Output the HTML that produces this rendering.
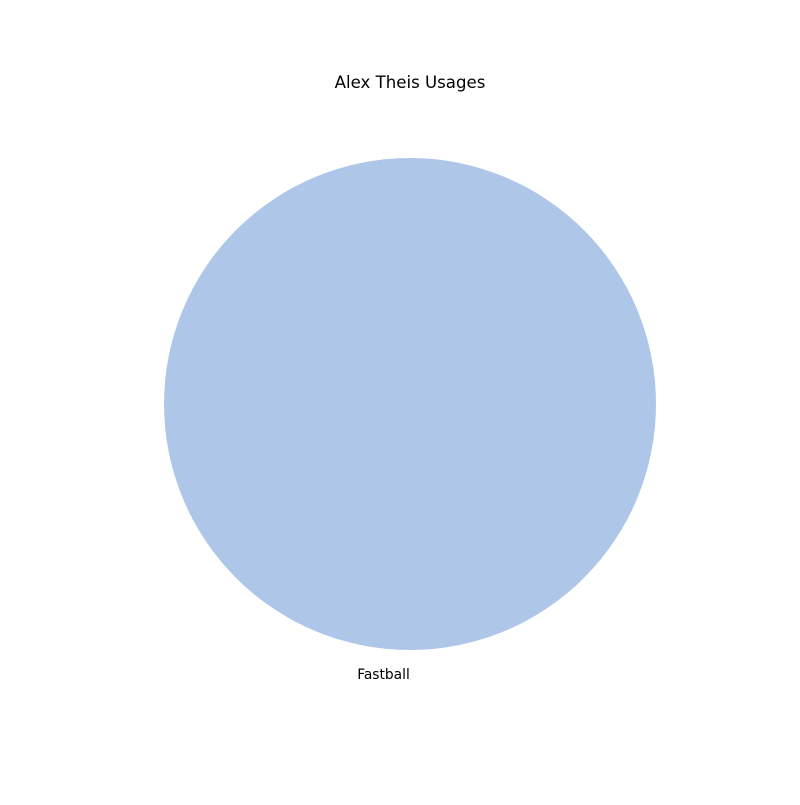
<!DOCTYPE html>
<html><head><style>html,body{margin:0;padding:0;background:#fff;}</style></head>
<body>
<svg width="800" height="800" xmlns="http://www.w3.org/2000/svg">
<rect width="800" height="800" fill="#fff"/>
<circle cx="410" cy="404" r="246" fill="#aec7e8"/>
<text x="410" y="88" font-family="DejaVu Sans, sans-serif" font-size="16.6" text-anchor="middle" fill="#000">Alex Theis Usages</text>
<text x="383.5" y="679" font-family="DejaVu Sans, sans-serif" font-size="13.8" text-anchor="middle" fill="#000">Fastball</text>
</svg>
</body></html>
